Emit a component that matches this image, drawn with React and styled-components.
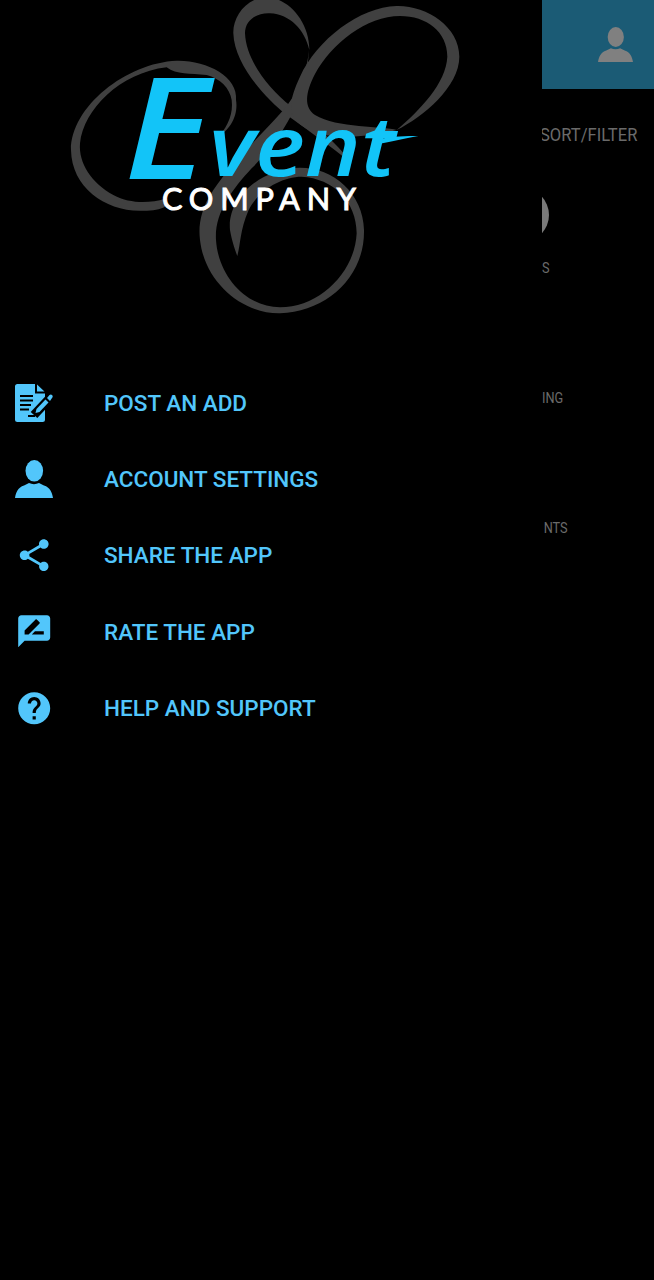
import React from 'react'
import styled, { createGlobalStyle } from 'styled-components'

const GlobalStyle = createGlobalStyle`
html, body {
  margin: 0;
  padding: 0;
  background: #000;
}
`

const menuItems = [
  { label: 'POST AN ADD', icon: 'post' },
  { label: 'ACCOUNT SETTINGS', icon: 'person' },
  { label: 'SHARE THE APP', icon: 'share' },
  { label: 'RATE THE APP', icon: 'rate' },
  { label: 'HELP AND SUPPORT', icon: 'help' },
]

const PersonIcon = ({ size = 38, color = '#52c6fb' }) => (
  <svg width={size} height={size} viewBox="0 0 38 38">
    <ellipse cx="19.3" cy="10.800" rx="8.800" ry="10.800" fill={color} />
    <path d="M0 38 C1 32 3 27.500 9 25.500 L14 23 C17 24.500 21 24.500 24 23 L29 25.500 C35 27.500 37 32 38 38 Z" fill={color} />
  </svg>
)

const PostIcon = () => (
  <svg width="38" height="38" viewBox="0 0 38 38">
    <path d="M2.500 0 H20 V9.500 H30 V35.500 Q30 38 27.500 38 H2.500 Q0 38 0 35.500 V2.500 Q0 0 2.500 0 Z" fill="#52c6fb" />
    <path d="M22 0.500 L29.500 7.500 H22 Z" fill="#52c6fb" />
    <path d="M5 12 H18 M5 16.500 H18 M5 21 H16 M5 25.500 H14 M13 32 H20" stroke="#000" strokeWidth="2" />
    <path d="M19 31 L34 15" stroke="#000" strokeWidth="9" />
    <path d="M21.500 25 L30.500 15.500 L33.500 18.500 L24.500 28 L20.500 29 Z" fill="#52c6fb" />
    <path d="M32 14 L34.500 11 Q36 10 37.200 11.200 Q38.300 12.500 37 14 L35 17 Z" fill="#52c6fb" />
  </svg>
)

const MaterialIcon = ({ d }) => (
  <svg width="38.4" height="38.4" viewBox="0 0 24 24">
    <path d={d} fill="#52c6fb" />
  </svg>
)

const renderIcon = (name) => {
  if (name === 'post') return <PostIcon />
  if (name === 'person') return <PersonIcon />
  if (name === 'share') {
    return <MaterialIcon d="M18 16.080c-.76 0-1.440.3-1.960.77L8.910 12.700c.05-.23.09-.46.09-.7s-.04-.47-.09-.7l7.050-4.110c.54.5 1.250.81 2.040.81 1.660 0 3-1.340 3-3s-1.340-3-3-3-3 1.340-3 3c0 .24.04.47.09.7L8.040 9.810C7.500 9.310 6.790 9 6 9c-1.660 0-3 1.340-3 3s1.340 3 3 3c.79 0 1.500-.31 2.040-.81l7.120 4.160c-.05.21-.08.43-.08.65 0 1.610 1.310 2.920 2.920 2.920 1.610 0 2.920-1.310 2.920-2.920s-1.310-2.920-2.920-2.920z" />
  }
  if (name === 'rate') {
    return <MaterialIcon d="M20 2H4c-1.100 0-2 .9-2 2v18l4-4h14c1.100 0 2-.9 2-2V4c0-1.100-.9-2-2-2zM6 14v-2.470l6.880-6.880c.2-.2.51-.2.71 0l1.770 1.770c.2.2.2.51 0 .71L8.470 14H6zm12 0h-7.500l2-2H18v2z" />
  }
  return <MaterialIcon d="M12 2C6.480 2 2 6.480 2 12s4.480 10 10 10 10-4.480 10-10S17.520 2 12 2zm1 17h-2v-2h2v2zm2.070-7.750l-.9.92C13.450 12.900 13 13.500 13 15h-2v-.5c0-1.100.45-2.100 1.170-2.830l1.240-1.260c.37-.36.59-.86.59-1.410 0-1.100-.9-2-2-2s-2 .9-2 2H8c0-2.210 1.790-4 4-4s4 1.790 4 4c0 .88-.36 1.680-.93 2.250z" />
}

const Logo = () => (
  <svg width="420" height="330" viewBox="0 0 1260 990">
    <g fill="#404040">
      <path d="M558 300 C565 230 470 180 380 182 C230 188 62 320 63 450 C65 565 170 637 280 632 C310 632 330 628 345 620 L345 596 C300 610 240 612 190 585 C125 550 85 490 90 430 C100 330 210 218 350 202 C380 225 420 220 470 225 C510 235 540 265 545 300 C550 340 535 375 510 405 C545 385 565 340 558 300 Z" />
      <path d="M778 150 C778 60 710 -8 650 -8 C590 -8 548 50 550 100 C553 190 640 290 710 345 C760 380 850 445 905 490 C860 425 780 365 722 318 C655 265 588 180 585 100 C585 60 620 38 660 40 C720 43 765 90 778 150 Z" />
      <path d="M778 130 C778 200 745 280 700 330 C640 400 550 480 490 570 C450 630 445 680 450 720 C465 850 580 942 690 940 C830 935 945 830 942 690 C940 580 850 503 750 503 C640 503 530 590 540 690 C545 720 555 750 562 768 C572 730 570 690 595 632 C625 570 695 530 755 530 C850 535 920 605 920 700 C915 815 810 922 690 922 C590 922 505 830 498 720 C493 640 545 570 605 505 C690 420 775 300 778 130 Z" />
      <path d="M1040 390 C1120 350 1228 260 1228 170 C1228 80 1130 16 1040 18 C930 20 800 120 750 230 C718 300 708 345 760 380 C800 410 900 425 1040 390 C1000 378 860 385 795 345 C762 322 765 280 795 222 C845 130 950 48 1050 48 C1130 48 1192 95 1192 170 C1188 250 1110 330 1040 390 Z" />
    </g>
    <EventWord x="222" y="528" textLength="815" lengthAdjust="spacingAndGlyphs">
      <tspan fontSize="425" dy="10">E</tspan>
      <tspan fontSize="250" dy="-10">vent</tspan>
    </EventWord>
    <path d="M985 418 C1030 408 1070 408 1105 408 C1060 416 1030 424 985 432 Z" fill="#12c4f8" />
    <CompanyWord x="336" y="630" textLength="582">COMPANY</CompanyWord>
  </svg>
)

export default function App() {
  return (
    <Screen>
      <GlobalStyle />
      <Drawer>
        <LogoArea>
          <Logo />
        </LogoArea>
        <Menu>
          {menuItems.map((item) => (
            <MenuRow key={item.label}>
              <IconSlot>{renderIcon(item.icon)}</IconSlot>
              <MenuLabel>{item.label}</MenuLabel>
            </MenuRow>
          ))}
        </Menu>
      </Drawer>
      <Behind>
        <TopBar>
          <PersonIcon size={35} color="#808080" />
        </TopBar>
        <SortRow>SORT/FILTER</SortRow>
        <Category $height={99}>
          <Circle />
          <CategoryLabel>S</CategoryLabel>
        </Category>
        <Category $height={130}>
          <CategoryLabel>ING</CategoryLabel>
        </Category>
        <Category $height={130}>
          <CategoryLabel $offset={2}>NTS</CategoryLabel>
        </Category>
      </Behind>
    </Screen>
  )
}

const Screen = styled.div`
display: flex;
width: 654px;
height: 1280px;
overflow: hidden;
background: #000;
`

const Drawer = styled.div`
width: 542px;
flex-shrink: 0;
background: #000;
`

const LogoArea = styled.div`
height: 365px;
padding-left: 50px;
box-sizing: border-box;
svg {
    display: block;
}
`

const EventWord = styled.text`
font-family: "Open Sans", sans-serif;
font-style: italic;
font-weight: 600;
fill: #12c4f8;
`

const CompanyWord = styled.text`
font-family: Lato, sans-serif;
font-size: 92px;
font-weight: 400;
fill: #fff;
stroke: #fff;
stroke-width: 3px;
`

const Menu = styled.div`
display: flex;
flex-direction: column;
`

const MenuRow = styled.div`
display: flex;
align-items: center;
height: 76.2px;
`

const IconSlot = styled.div`
width: 68px;
margin-right: 36px;
display: flex;
justify-content: center;
svg {
    display: block;
}
`

const MenuLabel = styled.span`
font-family: Roboto, sans-serif;
font-size: 22.5px;
font-weight: 500;
color: #52c6fb;
white-space: nowrap;
`

const Behind = styled.div`
width: 112px;
flex-shrink: 0;
overflow: hidden;
display: flex;
flex-direction: column;
font-family: Roboto, sans-serif;
color: #6a6a6a;
`

const TopBar = styled.div`
height: 89px;
flex-shrink: 0;
background: #1b5b75;
display: flex;
align-items: center;
justify-content: flex-end;
padding-right: 21px;
`

const SortRow = styled.div`
height: 90px;
flex-shrink: 0;
display: flex;
align-items: center;
margin-left: -2px;
font-size: 18px;
white-space: nowrap;
transform: scaleX(0.92);
transform-origin: left center;
`

const Category = styled.div`
height: ${props => props.$height}px;
flex-shrink: 0;
display: flex;
flex-direction: column;
justify-content: flex-end;
position: relative;
`

const Circle = styled.div`
position: absolute;
left: -47px;
top: 9px;
width: 54px;
height: 54px;
border-radius: 50%;
background: #7a7a7a;
`

const CategoryLabel = styled.div`
height: 20px;
line-height: 20px;
font-size: 15px;
padding-left: ${props => props.$offset || 0}px;
transform: scaleX(0.85);
transform-origin: left center;
`
